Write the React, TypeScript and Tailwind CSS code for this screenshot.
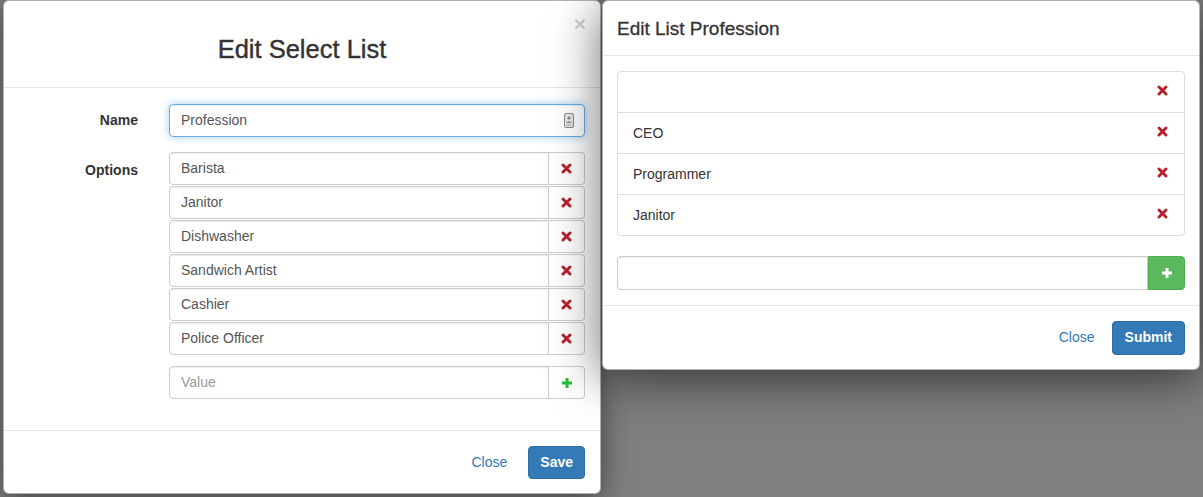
import React from 'react';

const font = { fontFamily: '"Liberation Sans", Arial, sans-serif' };

const RemoveIcon = () => (
  <svg width="11" height="11" viewBox="0 0 11 11" className="block">
    <path d="M2 2 L9 9 M9 2 L2 9" stroke="#b81f2d" strokeWidth="2.9" strokeLinecap="round" />
  </svg>
);

const PlusIcon = ({ color }: { color: string }) => (
  <svg width="12" height="12" viewBox="0 0 12 12" className="block">
    <path d="M6 1 V11 M1 6 H11" stroke={color} strokeWidth="3" />
  </svg>
);

const ContactIcon = () => (
  <svg width="10" height="15" viewBox="0 0 10 15" className="block">
    <rect x="0.5" y="0.5" width="9" height="14" rx="1.5" fill="#e6e6e6" stroke="#8a8a8a" />
    <circle cx="5" cy="5" r="1.6" fill="#8a8a8a" />
    <path d="M2.2 10 Q5 6.5 7.8 10 Z" fill="#8a8a8a" />
    <rect x="2.5" y="11.5" width="5" height="1" fill="#b0b0b0" />
  </svg>
);

const options = ['Barista', 'Janitor', 'Dishwasher', 'Sandwich Artist', 'Cashier', 'Police Officer'];
const professions = ['', 'CEO', 'Programmer', 'Janitor'];

const OptionRow = ({ value }: { value: string }) => (
  <div className="flex h-[33px]">
    <div className="flex-1 flex items-center border border-[#ccc] rounded-l-[4px] pl-[11px] pr-[12px] text-[14px] text-[#555] shadow-[inset_0_1px_1px_rgba(0,0,0,0.075)]">
      {value}
    </div>
    <div className="w-[36px] flex items-center justify-center border border-l-0 border-[#ccc] rounded-r-[4px] bg-white">
      <RemoveIcon />
    </div>
  </div>
);

function EditSelectList() {
  return (
    <div className="w-[598px] h-[494px] shrink-0 bg-white rounded-[6px] border border-black/30 flex flex-col shadow-[0_5px_30px_rgba(0,0,0,0.5)]">
      <div className="relative h-[87px] border-b border-[#e5e5e5] flex items-center justify-center">
        <h2 className="text-[25.5px] leading-none text-[#333] mt-[11px] [-webkit-text-stroke:0.4px_#333]">Edit Select List</h2>
        <span className="absolute right-[14px] top-[12px] text-[21px] font-bold leading-none text-black/20">×</span>
      </div>

      <div className="flex-1 pt-[16px] pr-[15px]">
        <div className="flex items-center gap-[31px]">
          <label className="w-[134px] text-right text-[14px] font-bold text-[#333]">Name</label>
          <div className="flex-1 h-[33px] flex items-center justify-between border border-[#66afe9] rounded-[4px] pl-[11px] pr-[10px] text-[14px] text-[#555] shadow-[inset_0_1px_1px_rgba(0,0,0,0.075),0_0_8px_rgba(102,175,233,0.6)]">
            <span>Profession</span>
            <ContactIcon />
          </div>
        </div>

        <div className="flex gap-[31px] mt-[15px]">
          <label className="w-[134px] text-right text-[14px] font-bold text-[#333] pt-[8px]">Options</label>
          <div className="flex-1 flex flex-col">
            <div className="flex flex-col gap-[1px]">
              {options.map((o) => (
                <OptionRow key={o} value={o} />
              ))}
            </div>
            <div className="flex h-[33px] mt-[11px]">
              <div className="flex-1 flex items-center border border-[#ccc] rounded-l-[4px] pl-[11px] pr-[12px] text-[14px] text-[#999] shadow-[inset_0_1px_1px_rgba(0,0,0,0.075)]">
                Value
              </div>
              <div className="w-[36px] flex items-center justify-center border border-l-0 border-[#ccc] rounded-r-[4px] bg-white">
                <PlusIcon color="#24c23a" />
              </div>
            </div>
          </div>
        </div>
      </div>

      <div className="h-[63px] border-t border-[#e5e5e5] flex items-center justify-end pr-[15px]">
        <span className="text-[14px] text-[#337ab7] mr-[21px]">Close</span>
        <button className="h-[33px] px-[11px] rounded-[4px] bg-[#337ab7] border border-[#2e6da4] text-white text-[14px] font-bold">
          Save
        </button>
      </div>
    </div>
  );
}

function EditListProfession() {
  return (
    <div className="relative z-10 w-[598px] h-[370px] shrink-0 bg-white rounded-[6px] border border-black/30 flex flex-col shadow-[0_8px_50px_rgba(0,0,0,0.6)]">
      <div className="h-[55px] shrink-0 border-b border-[#e5e5e5] flex items-center px-[14px]">
        <h4 className="text-[19px] text-[#333] leading-none [-webkit-text-stroke:0.3px_#333]">Edit List Profession</h4>
      </div>

      <div className="px-[14px] pt-[15px] pb-[15px]">
        <div className="border border-[#ddd] rounded-[4px]">
          {professions.map((p, i) => (
            <div
              key={i}
              className={`flex items-center justify-between pl-[15px] pr-[16px] text-[14px] text-[#333] ${i > 0 ? 'h-[41px] border-t border-[#ddd]' : 'h-[40px]'}`}
            >
              <span>{p}</span>
              <span className="-mt-[4px]">
                <RemoveIcon />
              </span>
            </div>
          ))}
        </div>

        <div className="flex h-[34px] mt-[20px]">
          <div className="flex-1 border border-[#ccc] rounded-l-[4px] shadow-[inset_0_1px_1px_rgba(0,0,0,0.075)]" />
          <button className="w-[37px] flex items-center justify-center bg-[#5cb85c] border border-[#4cae4c] rounded-r-[4px]">
            <PlusIcon color="#ffffff" />
          </button>
        </div>
      </div>

      <div className="flex-1 border-t border-[#e5e5e5] flex items-center justify-end pr-[14px]">
        <span className="text-[14px] text-[#337ab7] mr-[17px]">Close</span>
        <button className="h-[34px] px-[12px] rounded-[4px] bg-[#337ab7] border border-[#2e6da4] text-white text-[14px] font-bold">
          Submit
        </button>
      </div>
    </div>
  );
}

export default function App() {
  return (
    <div style={font} className="h-[497px] w-full overflow-hidden bg-[#7f7f7f] flex items-start pl-[3px] gap-[1px]">
      <EditSelectList />
      <EditListProfession />
    </div>
  );
}
